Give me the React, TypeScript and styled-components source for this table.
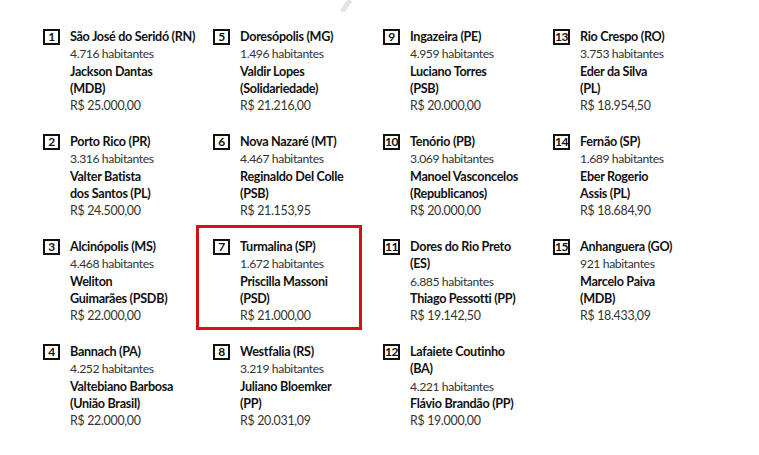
import React from "react";
import styled, { createGlobalStyle } from "styled-components";

const Global = createGlobalStyle`
  html, body { margin: 0; padding: 0; background: #fff; }
  body { font-family: Lato, "Open Sans", sans-serif; color: #222; }
`;

const Page = styled.div`
  position: relative;
  width: 759px;
  height: 455px;
  overflow: hidden;
  background: #fff;
`;

const Grid = styled.div`
  box-sizing: border-box;
  width: 677px;
  overflow: hidden;
  display: grid;
  grid-template-columns: repeat(3, 166px) 141px;
  grid-template-rows: repeat(4, 105px);
  grid-auto-flow: column;
  column-gap: 4px;
  padding: 15px 0 0 26px;
`;

const Cell = styled.div<{ $hl?: boolean }>`
  box-sizing: border-box;
  display: flex;
  align-items: flex-start;
  gap: 10px;
  padding: 10px 0 0 14px;
  border: 3px solid ${(p) => (p.$hl ? "#d3111b" : "transparent")};
  min-width: 0;
`;

const Badge = styled.div`
  box-sizing: border-box;
  flex: none;
  width: 17px;
  height: 16px;
  margin-top: 1px;
  border: 2px solid #111;
  display: flex;
  align-items: center;
  justify-content: center;
  font-size: 12px;
  font-weight: 700;
  letter-spacing: -0.5px;
  color: #111;
  line-height: 1;
`;

const Text = styled.div`
  display: flex;
  flex-direction: column;
  line-height: 17.25px;
  white-space: pre;
  letter-spacing: -0.3px;
`;

const Title = styled.div`
  font-size: 12.6px;
  font-weight: 700;
  color: #111;
`;

const Pop = styled.div`
  font-size: 12.2px;
  letter-spacing: -0.4px;
  color: #333;
`;

const Name = styled.div`
  font-size: 12.6px;
  font-weight: 700;
  color: #111;
`;

const Price = styled.div`
  font-size: 12.4px;
  color: #333;
`;

const Mark = styled.svg`
  position: absolute;
  left: 336px;
  top: 0;
`;

type Item = { n: number; title: string; pop: string; name: string; price: string };

const items: Item[] = [
  { n: 1, title: "São José do Seridó (RN)", pop: "4.716 habitantes", name: "Jackson Dantas\n(MDB)", price: "R$ 25.000,00" },
  { n: 2, title: "Porto Rico (PR)", pop: "3.316 habitantes", name: "Valter Batista\ndos Santos (PL)", price: "R$ 24.500,00" },
  { n: 3, title: "Alcinópolis (MS)", pop: "4.468 habitantes", name: "Weliton\nGuimarães (PSDB)", price: "R$ 22.000,00" },
  { n: 4, title: "Bannach (PA)", pop: "4.252 habitantes", name: "Valtebiano Barbosa\n(União Brasil)", price: "R$ 22.000,00" },
  { n: 5, title: "Doresópolis (MG)", pop: "1.496 habitantes", name: "Valdir Lopes\n(Solidariedade)", price: "R$ 21.216,00" },
  { n: 6, title: "Nova Nazaré (MT)", pop: "4.467 habitantes", name: "Reginaldo Del Colle\n(PSB)", price: "R$ 21.153,95" },
  { n: 7, title: "Turmalina (SP)", pop: "1.672 habitantes", name: "Priscilla Massoni\n(PSD)", price: "R$ 21.000,00" },
  { n: 8, title: "Westfalia (RS)", pop: "3.219 habitantes", name: "Juliano Bloemker\n(PP)", price: "R$ 20.031,09" },
  { n: 9, title: "Ingazeira (PE)", pop: "4.959 habitantes", name: "Luciano Torres\n(PSB)", price: "R$ 20.000,00" },
  { n: 10, title: "Tenório (PB)", pop: "3.069 habitantes", name: "Manoel Vasconcelos\n(Republicanos)", price: "R$ 20.000,00" },
  { n: 11, title: "Dores do Rio Preto\n(ES)", pop: "6.885 habitantes", name: "Thiago Pessotti (PP)", price: "R$ 19.142,50" },
  { n: 12, title: "Lafaiete Coutinho\n(BA)", pop: "4.221 habitantes", name: "Flávio Brandão (PP)", price: "R$ 19.000,00" },
  { n: 13, title: "Rio Crespo (RO)", pop: "3.753 habitantes", name: "Eder da Silva\n(PL)", price: "R$ 18.954,50" },
  { n: 14, title: "Fernão (SP)", pop: "1.689 habitantes", name: "Eber Rogerio\nAssis (PL)", price: "R$ 18.684,90" },
  { n: 15, title: "Anhanguera (GO)", pop: "921 habitantes", name: "Marcelo Paiva\n(MDB)", price: "R$ 18.433,09" },
];

export default function App() {
  return (
    <Page>
      <Global />
      <Mark width="20" height="12" viewBox="0 0 20 12">
        <path d="M6 12 L14 0" stroke="#e4e4e4" strokeWidth="5" />
      </Mark>
      <Grid>
        {items.map((it) => (
          <Cell key={it.n} $hl={it.n === 7}>
            <Badge>{it.n}</Badge>
            <Text>
              <Title>{it.title}</Title>
              <Pop>{it.pop}</Pop>
              <Name>{it.name}</Name>
              <Price>{it.price}</Price>
            </Text>
          </Cell>
        ))}
      </Grid>
    </Page>
  );
}
